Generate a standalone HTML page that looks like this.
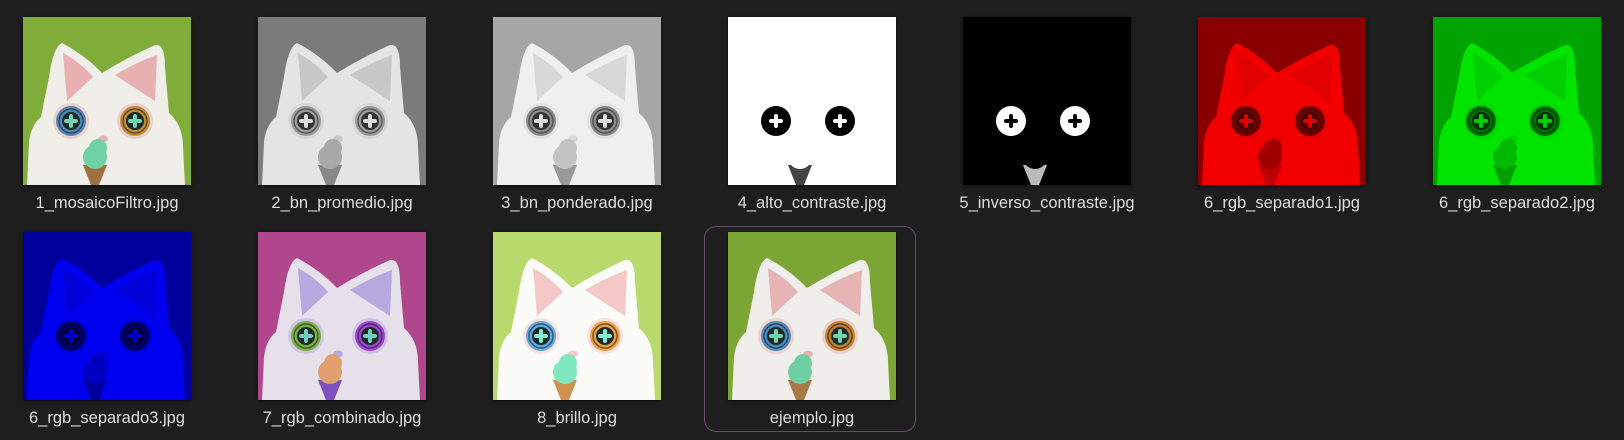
<!DOCTYPE html>
<html><head><meta charset="utf-8"><style>
html,body{margin:0;padding:0;background:#1e1e1e;width:1624px;height:440px;overflow:hidden;font-family:"Liberation Sans",sans-serif;}
.it{position:absolute;width:216px;text-align:center;}
.it svg{display:block;margin:0 auto;width:168px;height:168px;box-shadow:0 1px 3px rgba(0,0,0,.6);}
.it .l{color:#dedede;font-size:16.5px;margin-top:9px;white-space:nowrap;}
.sel{position:absolute;left:704px;top:226px;width:212px;height:206px;border:1.5px solid #6a4a6c;border-radius:12px;box-sizing:border-box;}
</style></head><body>
<div class="sel"></div>
<div id="g"></div>
<script>
var items=[
["1_mosaicoFiltro.jpg","#80ad3a","#f0eee8","#e8b0b0","#4f86b8","#c08a30","#1c2a2a","#6fd6b0","#70d0a8","#a07040"],
["2_bn_promedio.jpg","#7b7b7b","#e4e4e4","#c8c8c8","#9a9a9a","#9a9a9a","#333","#ddd","#a8a8a8","#888"],
["3_bn_ponderado.jpg","#a6a6a6","#efefef","#d8d8d8","#8a8a8a","#8a8a8a","#333","#ddd","#c4c4c4","#999"],
["4_alto_contraste.jpg","#ffffff","#ffffff","#ffffff","#000","#000","#000","#fff","#fff","#444"],
["5_inverso_contraste.jpg","#000000","#000000","#000000","#fff","#fff","#fff","#000","#000","#bbb"],
["6_rgb_separado1.jpg","#8a0000","#f20000","#e00000","#700000","#700000","#400000","#e00000","#a00000","#c00000"],
["6_rgb_separado2.jpg","#00a300","#00e400","#00d000","#007000","#007000","#003000","#00d000","#00b800","#00a000"],
["6_rgb_separado3.jpg","#00009c","#0000f0","#0000d8","#000070","#000070","#000030","#0000d0","#0000c0","#0000a0"],
["7_rgb_combinado.jpg","#b0468c","#e6e0ea","#b8a8e0","#7ab040","#a040d0","#1c2a2a","#70d0c0","#e0a070","#8050c0"],
["8_brillo.jpg","#b8da6c","#fbfbf8","#f5c8c8","#60a8e0","#f0a040","#1c2a2a","#80f0d0","#80e8c0","#d09050"],
["ejemplo.jpg","#7ba636","#efeeea","#e6b4b4","#4c86b8","#c47d2a","#1c2a2a","#6fd6b0","#6fd0a6","#a97a45"]];
function cat(c){
 var bg=c[1],f=c[2],ear=c[3],e1=c[4],e2=c[5],pu=c[6],cr=c[7],sc=c[8],co=c[9];
 function eye(x,col){return '<circle cx="'+x+'" cy="104" r="18" fill="'+ear+'" opacity=".5"/><circle cx="'+x+'" cy="104" r="15" fill="'+col+'"/><circle cx="'+x+'" cy="104" r="12" fill="none" stroke="'+pu+'" stroke-width="1.5" opacity=".6"/><circle cx="'+x+'" cy="104" r="9" fill="'+pu+'"/><path d="M'+(x-5)+' 104h10M'+x+' 99v10" stroke="'+cr+'" stroke-width="4" stroke-linecap="round"/>';}
 return '<svg viewBox="0 0 168 168"><rect width="168" height="168" fill="'+bg+'"/>'+
 '<path d="M4 168L6 125Q8 108 18 100L26 60Q30 30 39 26Q62 38 79 56Q105 40 132 28Q142 26 142 50L146 96Q160 108 160 130L162 168Z" fill="'+f+'"/>'+
 '<path d="M40 36Q58 46 70 60L44 84Z" fill="'+ear+'"/><path d="M134 38Q112 46 92 58L132 84Z" fill="'+ear+'"/>'+
 eye(48,e1)+eye(112,e2)+
 '<ellipse cx="80" cy="122" rx="5" ry="3.5" fill="'+ear+'"/>'+
 '<path d="M60 148L84 148L76 168L68 168Z" fill="'+co+'"/><circle cx="72" cy="140" r="12" fill="'+sc+'"/><circle cx="75" cy="131" r="9" fill="'+sc+'"/></svg>';
}
var h='';
items.forEach(function(c,i){var r=i<7?0:1,col=i<7?i:i-7;var x=23+col*235-24,y=r?232:17;
h+='<div class="it" style="left:'+x+'px;top:'+y+'px">'+cat(c)+'<div class="l">'+c[0]+'</div></div>';});
document.getElementById('g').innerHTML=h;
</script>
</body></html>
